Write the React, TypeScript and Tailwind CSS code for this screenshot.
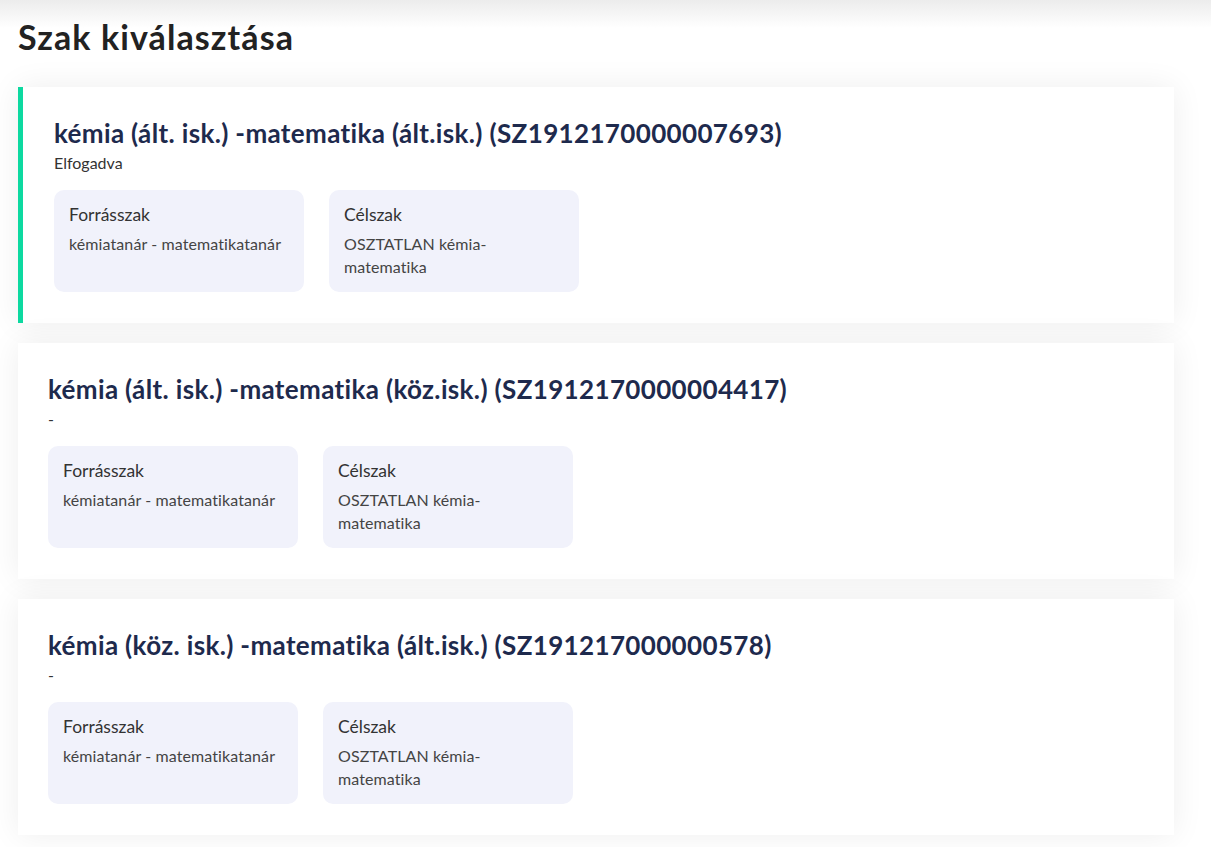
import React from 'react';

interface Szak {
  title: string;
  status: string;
  source: string;
  target: string;
  selected?: boolean;
}

const szakok: Szak[] = [
  {
    title: 'kémia (ált. isk.) -matematika (ált.isk.) (SZ1912170000007693)',
    status: 'Elfogadva',
    source: 'kémiatanár - matematikatanár',
    target: 'OSZTATLAN kémia-matematika',
    selected: true,
  },
  {
    title: 'kémia (ált. isk.) -matematika (köz.isk.) (SZ1912170000004417)',
    status: '-',
    source: 'kémiatanár - matematikatanár',
    target: 'OSZTATLAN kémia-matematika',
  },
  {
    title: 'kémia (köz. isk.) -matematika (ált.isk.) (SZ191217000000578)',
    status: '-',
    source: 'kémiatanár - matematikatanár',
    target: 'OSZTATLAN kémia-matematika',
  },
];

function InfoBox({ label, value }: { label: string; value: string }) {
  return (
    <div className="w-[250px] h-[102px] rounded-[10px] bg-[#f1f2fb] px-[15px] pt-[14px]">
      <div className="text-[17.5px] leading-[22px] text-[#333]">{label}</div>
      <div className="mt-[6px] text-[16px] leading-[23px] tracking-[0.1px] text-[#444]">{value}</div>
    </div>
  );
}

export default function App() {
  return (
    <div className="min-h-[847px] bg-[linear-gradient(to_bottom,#ececec,#ffffff_28px)] px-[18px] pt-[17px] pb-[12px] font-['Lato',sans-serif]">
      <h1 className="text-[34px] leading-[40px] font-bold text-[#222] tracking-[1.1px]">Szak kiválasztása</h1>

      <div className="mt-[30px] flex flex-col gap-[20px]">
        {szakok.map((szak) => (
          <div
            key={szak.title}
            className={`w-[1156px] bg-white shadow-[0_0_30px_rgba(0,0,0,0.07)] pt-[30px] pb-[31px] pr-[30px] ${
              szak.selected ? 'border-l-[5px] border-[#0cd9a0] pl-[31px]' : 'pl-[30px]'
            }`}
          >
            <h2 className="text-[26px] leading-[32px] font-bold text-[#1e2a4d] tracking-[0.35px]">{szak.title}</h2>
            <p className="mt-[4px] text-[16px] leading-[20px] text-[#333]">{szak.status}</p>
            <div className="mt-[17px] flex gap-[25px]">
              <InfoBox label="Forrásszak" value={szak.source} />
              <InfoBox label="Célszak" value={szak.target} />
            </div>
          </div>
        ))}
      </div>
    </div>
  );
}
